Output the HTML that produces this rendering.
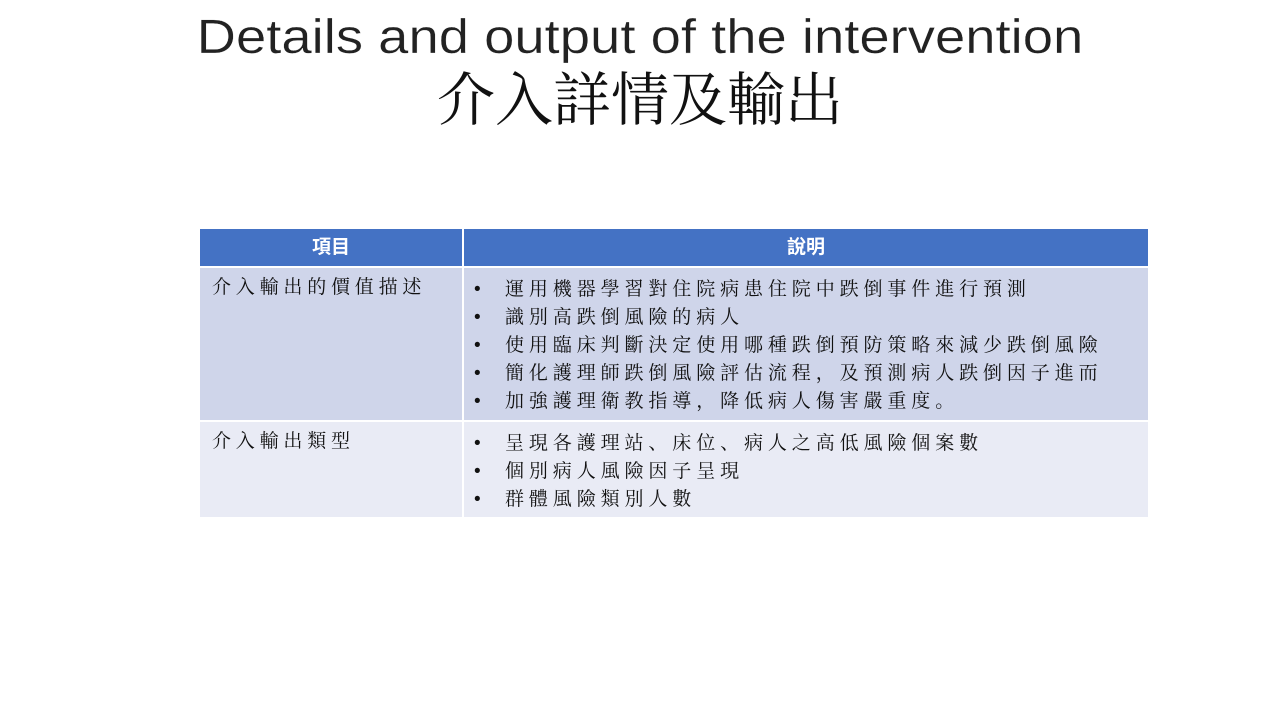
<!DOCTYPE html>
<html><head><meta charset="utf-8"><style>
body{margin:0;width:1280px;height:720px;background:#fff;position:relative;overflow:hidden}
.t1{position:absolute;left:0;width:1280px;top:6px;text-align:center;font:48px "Liberation Sans",sans-serif;color:#222;line-height:64px;transform:scaleX(1.134);transform-origin:640px 0;-webkit-text-stroke:0.3px #fff}
.t2{position:absolute;left:0;width:1280px;top:66px;text-align:center;font:58px "Liberation Serif","Noto Serif CJK SC",serif;color:#111;line-height:70px}
.c{position:absolute;box-sizing:border-box}
.h{background:#4472c4;color:#fff;font:bold 19px "Liberation Sans","Noto Sans CJK TC",sans-serif;text-align:center;line-height:37px}
.r1{background:#cfd5ea}.r2{background:#e9ebf5}
.tx{font:19px "Liberation Serif","Noto Serif CJK SC",serif;color:#111;line-height:28px}
.l{padding:6px 0 0 12px;letter-spacing:4.8px}
.b{padding:8px 0 0 0}
.b div{position:relative;padding-left:41px;letter-spacing:4.9px;white-space:nowrap}
.b div:before{content:"•";position:absolute;left:10px;letter-spacing:0;font-family:"Liberation Sans",sans-serif}
</style></head><body>
<div class="t1">Details and output of the intervention</div>
<div class="t2">介入詳情及輸出</div>
<div class="c h" style="left:200px;top:229px;width:262px;height:37px">項目</div>
<div class="c h" style="left:464px;top:229px;width:684px;height:37px">說明</div>
<div class="c r1 tx l" style="left:200px;top:268px;width:262px;height:152px">介入輸出的價值描述</div>
<div class="c r1 tx b" style="left:464px;top:268px;width:684px;height:152px">
<div>運用機器學習對住院病患住院中跌倒事件進行預測</div>
<div>識別高跌倒風險的病人</div>
<div>使用臨床判斷決定使用哪種跌倒預防策略來減少跌倒風險</div>
<div>簡化護理師跌倒風險評估流程，及預測病人跌倒因子進而</div>
<div>加強護理衛教指導，降低病人傷害嚴重度。</div>
</div>
<div class="c r2 tx l" style="left:200px;top:422px;width:262px;height:95px">介入輸出類型</div>
<div class="c r2 tx b" style="left:464px;top:422px;width:684px;height:95px">
<div>呈現各護理站、床位、病人之高低風險個案數</div>
<div>個別病人風險因子呈現</div>
<div>群體風險類別人數</div>
</div>
</body></html>
